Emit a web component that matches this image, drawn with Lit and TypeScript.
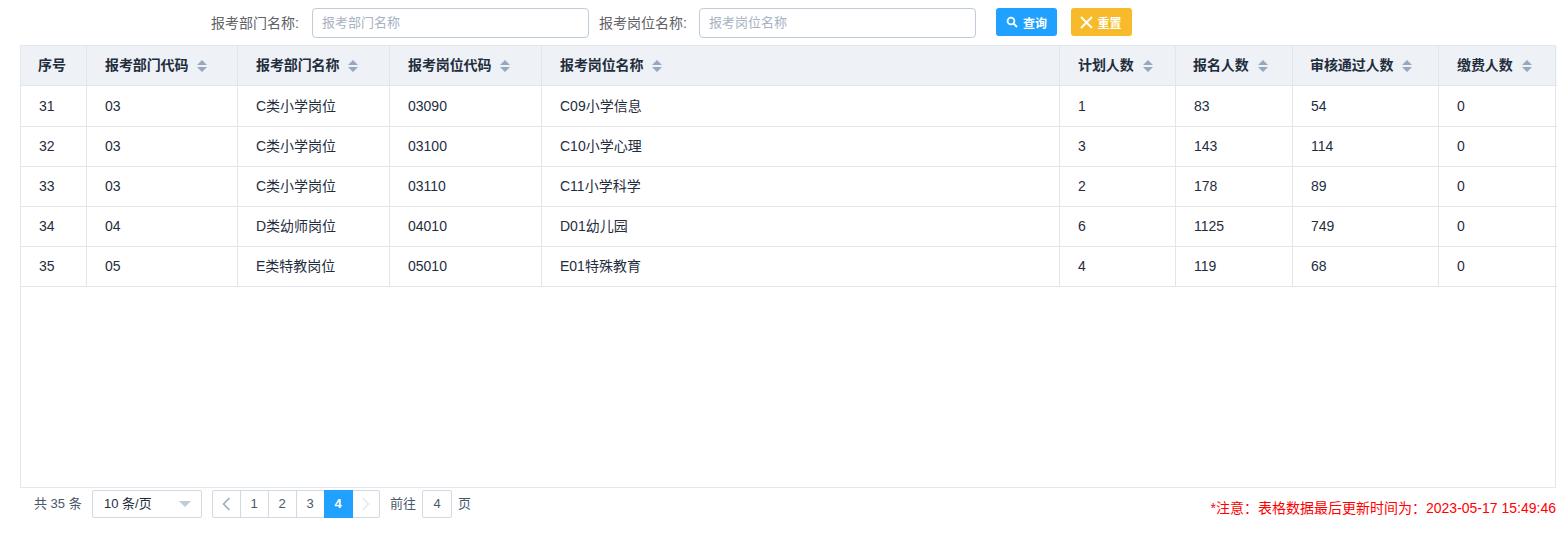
import { LitElement, html, css, svg } from "lit";
import { customElement } from "lit/decorators.js";

const cols = [66, 151, 152, 152, 518, 116, 117, 146, 118];
const heads = ["序号", "报考部门代码", "报考部门名称", "报考岗位代码", "报考岗位名称", "计划人数", "报名人数", "审核通过人数", "缴费人数"];
const rows = [
  ["31", "03", "C类小学岗位", "03090", "C09小学信息", "1", "83", "54", "0"],
  ["32", "03", "C类小学岗位", "03100", "C10小学心理", "3", "143", "114", "0"],
  ["33", "03", "C类小学岗位", "03110", "C11小学科学", "2", "178", "89", "0"],
  ["34", "04", "D类幼师岗位", "04010", "D01幼儿园", "6", "1125", "749", "0"],
  ["35", "05", "E类特教岗位", "05010", "E01特殊教育", "4", "119", "68", "0"],
];

@customElement("app-root")
export class AppRoot extends LitElement {
  static styles = css`
    :host { display: block; width: 1568px; height: 546px; overflow: hidden; background: #fff; box-sizing: border-box; padding: 0 12px 0 20px;
      font-family: "Liberation Sans", "Noto Sans CJK SC", sans-serif; font-size: 14px; color: #515a6e; }
    .bar { height: 45px; display: flex; align-items: flex-start; padding-left: 191px; box-sizing: border-box; }
    .label { line-height: 30px; margin-top: 8px; color: #606266; white-space: nowrap; width: 101px; }
    .label.second { width: 100px; margin-left: 10px; }
    .input { margin-top: 8px; width: 277px; height: 30px; box-sizing: border-box; border: 1px solid #c0ccda; border-radius: 4px; padding-left: 9px; line-height: 28px; font-size: 13px; color: #a8b2c2; }
    .btn { margin-top: 8px; width: 61px; height: 28px; border-radius: 3px; color: #fff; display: flex; align-items: center; justify-content: center; gap: 5px; font-size: 12px; font-weight: 700; }
    .btn.blue { background: #20a0ff; margin-left: 20px; }
    .btn.yellow { background: #f7ba2a; margin-left: 14px; gap: 4px; padding-right: 1px; box-sizing: border-box; }
    .grid { height: 443px; box-sizing: border-box; border: 1px solid #dfe6ec; border-bottom-color: #e4e8ed; }
    table { border-collapse: separate; border-spacing: 0; table-layout: fixed; width: 1535px; color: #1f2d3d; }
    th { background: #eef1f6; height: 40px; box-sizing: border-box; text-align: left; padding: 0 0 0 18px; font-weight: 700; font-size: 13px; line-height: 18px; color: #1f2d3d; border-right: 1px solid #dfe6ec; border-bottom: 1px solid #dfe6ec; white-space: nowrap; }
    th:nth-child(1), th:nth-child(7) { padding-left: 17px; }
    th:nth-child(8) { padding-left: 17px; }
    th span { font-size: 14px; letter-spacing: -0.1px; }
    td { height: 40px; box-sizing: border-box; padding: 0 0 1px 18px; line-height: 20px; border-right: 1px solid #dfe6ec; border-bottom: 1px solid #dfe6ec; white-space: nowrap; color: #1f2d3d; }
    tr > *:last-child { border-right: none; }
    th:last-child { box-shadow: inset -1px 0 0 #f6f7fa, inset -2px 0 0 #dfe6ec; }
    tbody tr:first-child td { height: 41px; padding-bottom: 0; }
    .sort { display: inline-block; vertical-align: -2px; margin-left: 9px; }
    .foot { display: flex; justify-content: space-between; align-items: flex-start; }
    .pager { display: flex; align-items: center; padding: 2px 0 0 14px; height: 28px; line-height: 26px; font-size: 13px; }
    .total { width: 58px; white-space: nowrap; color: #48576a; margin-top: -1px; }
    .select { width: 110px; height: 28px; box-sizing: border-box; border: 1px solid #d1dbe5; border-radius: 2px; display: flex; align-items: center; justify-content: space-between; padding: 0 10px 0 11px; color: #1f2d3d; margin-right: 10px; }
    .tri { width: 0; height: 0; border-left: 6px solid transparent; border-right: 6px solid transparent; border-top: 6px solid #bfcbd9; }
    .pages { display: flex; height: 28px; box-sizing: border-box; border: 1px solid #d1dbe5; border-radius: 2px; }
    .page { width: 28px; box-sizing: content-box; display: flex; align-items: center; justify-content: center; border-right: 1px solid #d1dbe5; color: #48576a; line-height: 26px; margin-right: -1px; }
    .page:first-child { width: 27px; }
    .page:last-child { border-right: none; margin-right: 0; width: 27px; }
    .page.on { background: #20a0ff; color: #fff; font-weight: 700; border-right-color: #20a0ff; position: relative; margin-top: -1px; margin-bottom: -1px; line-height: 28px; }
    .goto { margin-left: 10px; color: #48576a; white-space: nowrap; margin-top: -1px; }
    .page-word { color: #48576a; white-space: nowrap; margin-top: -1px; }
    .jump { width: 30px; height: 28px; box-sizing: border-box; border: 1px solid #d1dbe5; border-radius: 2px; margin: 0 6px 0 6px; display: flex; align-items: center; justify-content: center; color: #48576a; }
    .note { color: #f00; margin-top: 12px; line-height: 16px; white-space: nowrap; }
  `;

  sort() {
    return svg`<svg class="sort" width="10" height="12" viewBox="0 0 10 12"><path d="M5 0 10 5H0Z M0 7H10L5 12Z" fill="#97a8be"/></svg>`;
  }

  render() {
    return html`
      <div class="bar">
        <div class="label">报考部门名称:</div>
        <div class="input">报考部门名称</div>
        <div class="label second">报考岗位名称:</div>
        <div class="input">报考岗位名称</div>
        <div class="btn blue">
          <svg width="12" height="12" viewBox="0 0 12 12"><circle cx="5" cy="5" r="3.4" fill="none" stroke="#fff" stroke-width="1.8"/><path d="M7.6 7.6 11 11" stroke="#fff" stroke-width="2"/></svg>
          <span>查询</span>
        </div>
        <div class="btn yellow">
          <svg width="13" height="13" viewBox="0 0 13 13"><path d="M1 1 12 12M12 1 1 12" stroke="#fff" stroke-width="1.8"/></svg>
          <span>重置</span>
        </div>
      </div>
      <div class="grid">
        <table>
          <colgroup>${cols.map((w) => html`<col style="width:${w}px" />`)}</colgroup>
          <thead><tr>${heads.map((h, i) => html`<th><span>${h}</span>${i ? this.sort() : ""}</th>`)}</tr></thead>
          <tbody>${rows.map((r) => html`<tr>${r.map((c) => html`<td>${c}</td>`)}</tr>`)}</tbody>
        </table>
      </div>
      <div class="foot">
        <div class="pager">
          <span class="total">共 35 条</span>
          <div class="select"><span>10 条/页</span><i class="tri"></i></div>
          <div class="pages">
            <div class="page"><svg width="9" height="14" viewBox="0 0 9 14"><path d="M7.5 1 1.5 7l6 6" fill="none" stroke="#97a8be" stroke-width="1.5"/></svg></div>
            <div class="page">1</div>
            <div class="page">2</div>
            <div class="page">3</div>
            <div class="page on">4</div>
            <div class="page"><svg width="9" height="14" viewBox="0 0 9 14"><path d="M1.5 1l6 6-6 6" fill="none" stroke="#e4e7ed" stroke-width="1.5"/></svg></div>
          </div>
          <span class="goto">前往</span>
          <div class="jump">4</div>
          <span class="page-word">页</span>
        </div>
        <div class="note">*注意：表格数据最后更新时间为：2023-05-17 15:49:46</div>
      </div>
    `;
  }
}
